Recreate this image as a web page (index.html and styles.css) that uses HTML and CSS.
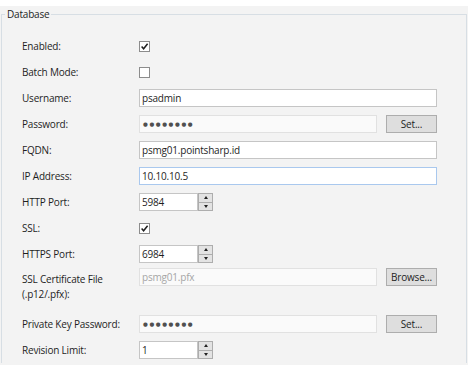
FILE: index.html
```html
<!DOCTYPE html>
<html>
<head>
<meta charset="utf-8">
<link rel="stylesheet" href="styles.css">
</head>
<body>
<div class="topbar"></div>
<fieldset class="group">
  <legend>Database</legend>
  <div class="form">
    <div class="row">
      <span class="label">Enabled:</span>
      <span class="check"><svg viewBox="0 0 9 9" width="9" height="9"><path d="M1.6 4.6 L3.6 6.8 L7.6 1.8" fill="none" stroke="#1e1e1e" stroke-width="1.5"/></svg></span>
    </div>
    <div class="row">
      <span class="label">Batch Mode:</span>
      <span class="check"></span>
    </div>
    <div class="row">
      <span class="label">Username:</span>
      <div class="input">psadmin</div>
    </div>
    <div class="row">
      <span class="label">Password:</span>
      <div class="input short disabled pw">●●●●●●●●</div>
      <div class="btn">Set...</div>
    </div>
    <div class="row">
      <span class="label">FQDN:</span>
      <div class="input">psmg01.pointsharp.id</div>
    </div>
    <div class="row">
      <span class="label">IP Address:</span>
      <div class="input focus">10.10.10.5</div>
    </div>
    <div class="row">
      <span class="label">HTTP Port:</span>
      <div class="spin">
        <div class="spin-input">5984</div>
        <div class="spin-btns"><span class="up"></span><span class="down"></span></div>
      </div>
    </div>
    <div class="row">
      <span class="label">SSL:</span>
      <span class="check"><svg viewBox="0 0 9 9" width="9" height="9"><path d="M1.6 4.6 L3.6 6.8 L7.6 1.8" fill="none" stroke="#1e1e1e" stroke-width="1.5"/></svg></span>
    </div>
    <div class="row">
      <span class="label">HTTPS Port:</span>
      <div class="spin">
        <div class="spin-input">6984</div>
        <div class="spin-btns"><span class="up"></span><span class="down"></span></div>
      </div>
    </div>
    <div class="row tall">
      <span class="label">SSL Certificate File<br>(.p12/.pfx):</span>
      <div class="input short disabled">psmg01.pfx</div>
      <div class="btn">Browse...</div>
    </div>
    <div class="row">
      <span class="label">Private Key Password:</span>
      <div class="input short disabled pw">●●●●●●●●</div>
      <div class="btn">Set...</div>
    </div>
    <div class="row">
      <span class="label">Revision Limit:</span>
      <div class="spin">
        <div class="spin-input">1</div>
        <div class="spin-btns"><span class="up"></span><span class="down"></span></div>
      </div>
    </div>
  </div>
</fieldset>
</body>
</html>
```
FILE: styles.css
```css
* { box-sizing: border-box; }
html, body { margin: 0; padding: 0; }
body {
  background: #f3f3f3;
  font-family: "Open Sans", "Noto Sans", sans-serif;
  font-size: 10px;
  letter-spacing: -0.2px;
  color: #1e1e1e;
  width: 468px;
  height: 365px;
  overflow: hidden;
}
.topbar { height: 6px; background: #ffffff; }
.group {
  margin: 1px 1px 0 1px;
  padding: 0;
  border: 1px solid #d7dee4;
  border-bottom: 0;
  min-width: 0;
}
.group legend {
  margin-left: 3px;
  padding: 0 2px;
  line-height: 14px;
  font-size: 10px;
  color: #1e1e1e;
}
.form { padding: 12px 0 0 20px; }
.row {
  display: flex;
  align-items: center;
  height: 26px;
}
.row.tall {
  height: 44px;
  align-items: flex-start;
}
.label {
  width: 117px;
  flex: none;
  line-height: 15px;
}
.row.tall .label { padding-top: 5px; }
.row.tall .input, .row.tall .btn { margin-top: 1px; }
.check {
  width: 11px;
  height: 11px;
  border: 1px solid #8c8c8c;
  background: #ffffff;
  display: flex;
  align-items: center;
  justify-content: center;
}
.input {
  width: 298px;
  height: 18px;
  flex: none;
  border: 1px solid #c5c5c5;
  background: #ffffff;
  padding: 0 2px;
  display: flex;
  align-items: center;
  white-space: nowrap;
}
.input.short { width: 238px; }
.input.focus { border-color: #a9c8ee; }
.input.disabled {
  background: #fafafa;
  border-color: #e1e1e1;
  color: #a6a6a6;
}
.input.pw {
  color: #505050;
  font-family: "DejaVu Sans", sans-serif;
  font-size: 5.5px;
  letter-spacing: 1.6px;
  padding-left: 3px;
}
.btn {
  width: 51px;
  height: 18px;
  flex: none;
  margin-left: 9px;
  background: #dedede;
  border: 1px solid #adadad;
  display: flex;
  align-items: center;
  justify-content: center;
  color: #1e1e1e;
}
.spin {
  display: flex;
  height: 18px;
}
.spin-input {
  width: 59px;
  height: 18px;
  border: 1px solid #c5c5c5;
  background: #ffffff;
  padding: 0 2px;
  display: flex;
  align-items: center;
}
.spin-btns {
  width: 15px;
  height: 18px;
  border: 1px solid #adadad;
  background: #e3e3e3;
  display: flex;
  flex-direction: column;
}
.spin-btns span {
  flex: 1;
  display: flex;
  align-items: center;
  justify-content: center;
}
.spin-btns .up { border-bottom: 1px solid #adadad; }
.spin-btns .up::after {
  content: "";
  border-left: 2.5px solid transparent;
  border-right: 2.5px solid transparent;
  border-bottom: 3px solid #222;
}
.spin-btns .down::after {
  content: "";
  border-left: 2.5px solid transparent;
  border-right: 2.5px solid transparent;
  border-top: 3px solid #222;
}
```
